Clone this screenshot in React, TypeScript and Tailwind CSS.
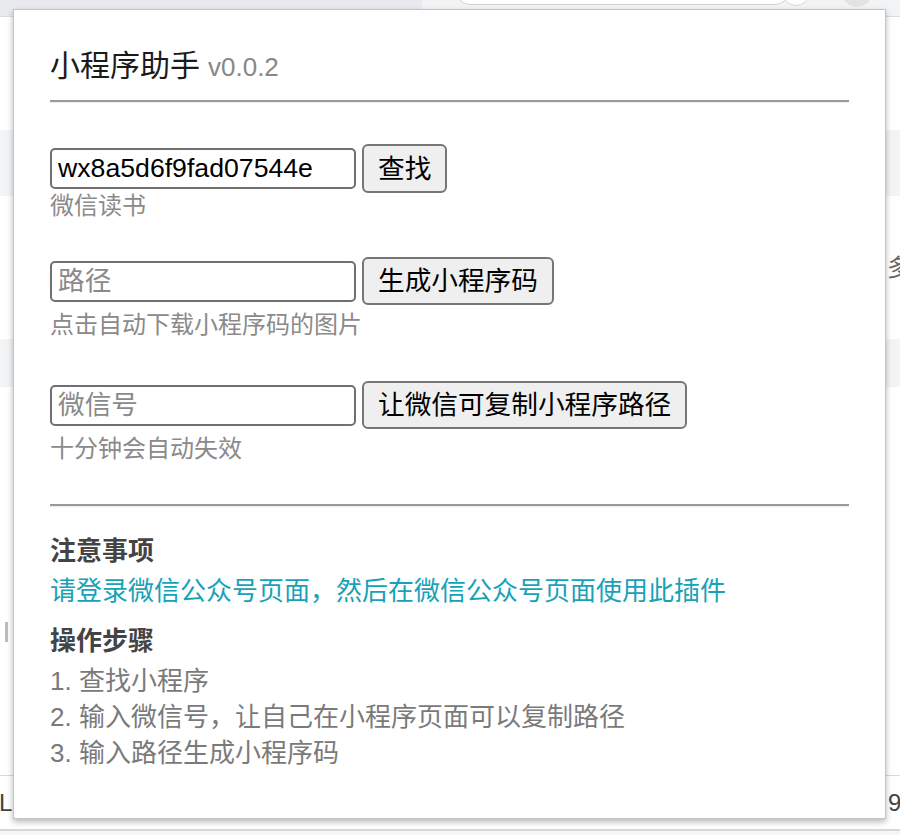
export default function App() {
	return (
		<div className="relative h-[836px] w-[900px] overflow-hidden bg-white font-['Liberation_Sans','Noto_Sans_CJK_SC',sans-serif]">
			{/* browser behind the popup */}
			<div className="flex h-[17px] items-end border-b border-[#dadce0] bg-[#f1f3f4]">
				<div className="h-[17px] w-[422px] rounded-br-[12px] bg-[#e8eaed]" />
				<div className="ml-[33px] mb-[11px] h-[30px] w-[335px] rounded-b-[15px] border border-[#d0d0d0] bg-white" />
				<div className="ml-[-8px] mb-[10px] h-[28px] w-[28px] rounded-full border border-[#d8d8d8] bg-white" />
				<div className="ml-[32px] mb-[9px] h-[30px] w-[30px] rounded-full bg-[#e3e3e3]" />
			</div>
			<div className="h-[113px]" />
			<div className="h-[66px] bg-[#f3f4f6]" />
			<div className="flex h-[143px] items-center pl-[887px] text-[24px] text-[#666]">多</div>
			<div className="h-[48px] bg-[#f3f4f6]" />
			<div className="h-[235px]" />
			<div className="ml-[5px] h-[20px] w-[3px] bg-[#bdbdbd]" />
			<div className="h-[133px]" />
			<div className="flex h-[54px] items-center justify-between border-t border-[#d9d9d9] text-[24px] text-[#444]">
				<span className="-ml-[1px]">L</span>
				<span className="-mr-[6px] w-[18px]">9</span>
			</div>
			<div className="h-[6px] border-t-2 border-[#d6d6d6] bg-[#f6f6f6]" />

			{/* extension popup */}
			<div className="absolute left-[13px] top-[9px] flex h-[810px] w-[873px] flex-col border border-[#c4c4c4] bg-white px-[36px] pt-[36px] shadow-[0_3px_6px_rgba(0,0,0,0.28)]">
				<div className="leading-[40px]">
					<span className="text-[30px] text-[#1a1a1a]">小程序助手</span>
					<span className="ml-[8px] text-[26px] text-[#888]">v0.0.2</span>
				</div>
				<div className="mt-[9px] border-t-2 border-b border-t-[#9a9a9a] border-b-[#ececec]" />

				<div className="mt-[41px] flex h-[49px] items-center gap-[6px]">
					<input
						className="h-[41px] w-[306px] rounded-[5px] border-2 border-[#707070] px-[6px] text-[26.67px] text-black outline-none placeholder:text-[#8a8a8a]"
						defaultValue="wx8a5d6f9fad07544e"
					/>
					<button className="h-[49px] rounded-[6px] border-2 border-[#767676] bg-[#efefef] px-[14px] text-[26.67px] text-black">查找</button>
				</div>
				<div className="mt-[2px] text-[24px] leading-[22px] text-[#8a8a8a]">微信读书</div>

				<div className="mt-[40px] flex h-[48px] items-center gap-[6px]">
					<input
						className="h-[41px] w-[306px] rounded-[5px] border-2 border-[#707070] px-[6px] text-[26.67px] text-black outline-none placeholder:text-[#8a8a8a]"
						placeholder="路径"
					/>
					<button className="h-[48px] rounded-[6px] border-2 border-[#767676] bg-[#efefef] px-[14px] text-[26.67px] text-black">生成小程序码</button>
				</div>
				<div className="mt-[9px] text-[24px] leading-[22px] text-[#8a8a8a]">点击自动下载小程序码的图片</div>

				<div className="mt-[45px] flex h-[48px] items-center gap-[6px]">
					<input
						className="h-[41px] w-[306px] rounded-[5px] border-2 border-[#707070] px-[6px] text-[26.67px] text-black outline-none placeholder:text-[#8a8a8a]"
						placeholder="微信号"
					/>
					<button className="h-[48px] rounded-[6px] border-2 border-[#767676] bg-[#efefef] px-[14px] text-[26.67px] text-black">让微信可复制小程序路径</button>
				</div>
				<div className="mt-[9px] text-[24px] leading-[22px] text-[#8a8a8a]">十分钟会自动失效</div>

				<div className="mt-[44px] border-t-2 border-b border-t-[#9a9a9a] border-b-[#ececec]" />

				<div className="mt-[26px] text-[26px] font-bold leading-[36px] text-[#444]">注意事项</div>
				<div className="mt-[4px] text-[26px] leading-[36px] text-[#17a2b8]">请登录微信公众号页面，然后在微信公众号页面使用此插件</div>
				<div className="mt-[14px] text-[26px] font-bold leading-[36px] text-[#444]">操作步骤</div>
				<ul className="mt-[4px] text-[26px] leading-[36px] text-[#7a7a7a]">
					<li>1. 查找小程序</li>
					<li>2. 输入微信号，让自己在小程序页面可以复制路径</li>
					<li>3. 输入路径生成小程序码</li>
				</ul>
			</div>
		</div>
	)
}
